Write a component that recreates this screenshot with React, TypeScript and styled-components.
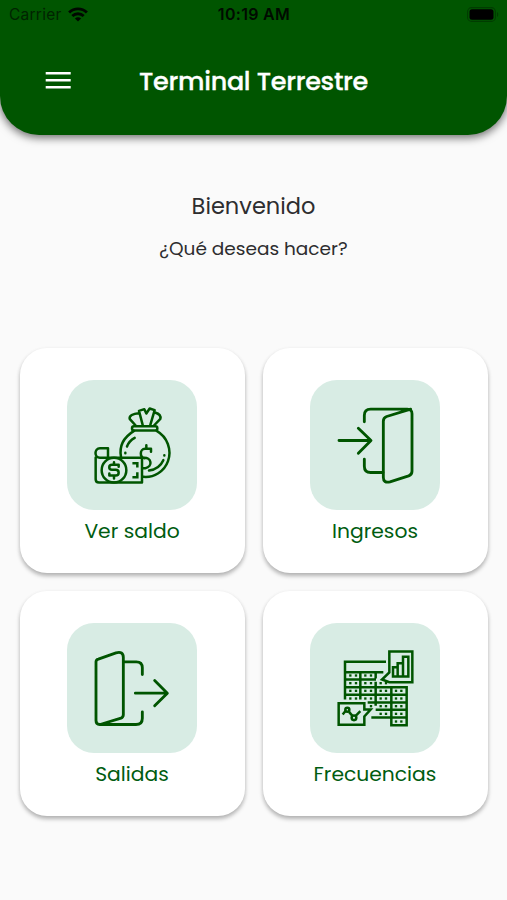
import React from "react";
import styled, { createGlobalStyle } from "styled-components";

const green = "#005500";

const GlobalStyle = createGlobalStyle`
  *, *::before, *::after { box-sizing: border-box; }
  body { margin: 0; background: #fafafa; }
`;

const Screen = styled.div`
  width: 507px;
  height: 900px;
  overflow: hidden;
  background: #fafafa;
  font-family: Poppins, Inter, "Open Sans", sans-serif;
`;

const Header = styled.header`
  height: 135px;
  background: ${green};
  border-radius: 0 0 39px 39px;
  box-shadow: 0 2px 9px 1px rgba(0, 0, 0, 0.55);
`;

const StatusBar = styled.div`
  display: grid;
  grid-template-columns: 1fr auto 1fr;
  align-items: center;
  height: 28px;
  padding: 0 8px 0 9px;
  font-family: Inter, sans-serif;
  font-size: 15.5px;
  color: #000;
`;

const Carrier = styled.div`
  display: flex;
  align-items: center;
  gap: 6px;
  letter-spacing: 0.25px;
  color: #002300;
`;

const Clock = styled.div`
  font-size: 16px;
  font-weight: 600;
  letter-spacing: 0.3px;
  color: #000b00;
`;

const BatterySlot = styled.div`
  display: flex;
  justify-content: flex-end;
`;

const TitleBar = styled.div`
  display: grid;
  grid-template-columns: 71px 1fr 71px;
  align-items: center;
  height: 106px;
`;

const MenuButton = styled.button`
  display: flex;
  justify-content: flex-end;
  padding: 0;
  border: 0;
  background: none;
`;

const Title = styled.h1`
  margin: 0;
  text-align: center;
  white-space: nowrap;
  font-size: 25.5px;
  line-height: 32px;
  font-weight: 500;
  letter-spacing: -0.3px;
  -webkit-text-stroke: 0.3px #fff;
  color: #fff;
`;

const Welcome = styled.section`
  display: flex;
  flex-direction: column;
  align-items: center;
  height: 213px;
  padding-top: 54.5px;
  color: #2d2d2f;
`;

const Greeting = styled.h2`
  margin: 0;
  font-size: 22.5px;
  line-height: 32px;
  font-weight: 400;
`;

const Question = styled.p`
  margin: 12px 0 0;
  font-size: 18.5px;
  line-height: 30px;
`;

const CardGrid = styled.main`
  display: grid;
  grid-template-columns: 225px 225px;
  grid-auto-rows: 225px;
  gap: 18px;
  justify-content: center;
`;

const Card = styled.button`
  display: flex;
  flex-direction: column;
  align-items: center;
  padding: 32px 0 0;
  border: 0;
  border-radius: 27px;
  background: #fff;
  box-shadow: 0 3px 4px rgba(0, 0, 0, 0.27), 0 1px 4px rgba(0, 0, 0, 0.05);
  font: inherit;
  color: #005c10;
`;

const IconTile = styled.div`
  display: flex;
  align-items: center;
  justify-content: center;
  width: 130px;
  height: 130px;
  border-radius: 27px;
  background: #d8ece4;
`;

const CardLabel = styled.span`
  margin-top: 6px;
  font-size: 20.3px;
  line-height: 30px;
`;

const Drawing = styled.svg<{ $stroke?: number }>`
  display: block;
  width: 95px;
  height: 95px;
  fill: none;
  stroke: ${green};
  stroke-width: ${(p) => p.$stroke ?? 8.5};
  stroke-linecap: round;
  stroke-linejoin: round;
`;

const WifiIcon = () => (
  <svg width="20" height="15" viewBox="0 0 20 15" fill="none" stroke="#000800" strokeWidth="2.9">
    <path d="M1.1 5.5C6.2.7 13.8.7 18.9 5.5" />
    <path d="M4.3 9C7.5 6 12.5 6 15.7 9" />
    <path d="M10 14.4 6.9 11.4c1.7-1.6 4.5-1.6 6.2 0Z" fill="#000800" stroke="none" />
  </svg>
);

const BatteryIcon = () => (
  <svg width="32" height="15" viewBox="0 0 32 15">
    <rect x=".6" y=".6" width="27.8" height="13.8" rx="4" fill="none" stroke="#003c00" strokeWidth="1.1" />
    <rect x="2.5" y="2.3" width="24" height="10.4" rx="2.5" fill="#000" />
    <path d="M30 5c1.7.8 1.7 4.2 0 5Z" fill="#003c00" />
  </svg>
);

const MenuIcon = () => (
  <svg width="26" height="18" viewBox="0 0 26 18" fill="#fff">
    <path d="M.7 0h25v2.6H.7zM.7 7h25v2.6H.7zM.7 14h25v2.6H.7z" />
  </svg>
);

const MoneyIcon = () => (
  <Drawing viewBox="0 7.5 285 285" $stroke={7.5}>
    <rect x="141" y="92" width="76" height="13" rx="6" />
    <path d="M152 90 134 70c-2-9 10-16 27-17 M173 88 162 46l16-5 6 13 10-15 15 5-13 44 M210 51c13 4 18 11 16 19l-19 20" />
    <path d="M108 184c-6-31 7-58 39-78 M215 106c32 18 46 57 34 91-11 31-42 50-74 47" />
    <path d="M126 153c4-11 12-20 23-26 M235 194c-8 18-22 28-43 31" />
    <path d="M121 172v1 M238 179v1" />
    <path d="M184 149v9 M198 169v-9h-18c-16 0-17 26-1 28 M174 187c27-3 30 27 7 31h-8" />
    <path d="M32 186v65q0 10 10 10h129v-74H45c-18 0-18-29 0-29h24v28" />
    <circle cx="87" cy="224" r="37" />
    <path d="M101 214v-6H81c-11 0-11 15 0 15h11c12 0 12 17 0 17H73v-6 M87 200v8 M87 240v9" />
    <path d="M146 203h11v9 M157 234v11h-11" strokeLinecap="square" strokeLinejoin="miter" />
  </Drawing>
);

const EnterIcon = () => (
  <Drawing viewBox="0 7.5 285 285">
    <path d="M109 79V60q0-19 19-19h110q14 0 14 14v172q0 10-10 14l-56 18q-20 5-20-14V77q0-10 10-14l72-22" />
    <path d="M109 191v21q0 19 19 19h37 M33 135h95 M91 98l38 37-38 38" />
  </Drawing>
);

const ExitIcon = () => (
  <Drawing viewBox="0 1.5 285 285">
    <path d="M172 102V82q0-18-18-18h-37 M172 214v19q0 19-19 19H44q-11 0-11-12V64q0-6 7-8l53-19q22-6 22 14v171q0 8-7 11l-63 19" />
    <path d="M151 158h95 M209 120l38 38-38 38" />
  </Drawing>
);

const cellDots = [
  [67, 105], [84, 105], [112, 105], [129, 105],
  [67, 128], [84, 128], [112, 128], [129, 128], [158, 128], [174, 128],
  [67, 151], [84, 151], [112, 151], [129, 151], [158, 151], [174, 151], [204, 151], [220, 151],
  [67, 174], [84, 174], [112, 174], [129, 174], [158, 174], [174, 174], [204, 174], [220, 174],
  [129, 197], [158, 197], [174, 197], [204, 197], [220, 197],
  [158, 220], [174, 220], [204, 220], [220, 220],
  [204, 243], [220, 243],
];

const ScheduleIcon = () => (
  <Drawing viewBox="0 1.5 285 285" $stroke={7.5}>
    <g strokeLinecap="butt" strokeLinejoin="miter">
      <path d="M51 177V64h123 M51 95h115 M51 117h93 M51 140h185v114h-46V140 M51 163h185 M97 95v82 M143 95v19 M143 124v72 M119 186h117 M143 208h93 M130 231h106" />
      <path d="M184 96V33h69v92h-69l-22-8Z M195 80h14v28h-14z M209 68h16v40h-16z M225 49h16v59h-16z" />
      <path d="M32 188h77v19h19l-19 21v25H32z" />
      <path d="m44 222 9-11 M63 214l11 13 M83 226l14-14" />
      <circle cx="58" cy="208" r="6" />
      <circle cx="78" cy="232" r="7" />
    </g>
    <g fill={green} stroke="none">
      {cellDots.map(([x, y]) => (
        <rect key={`${x}-${y}`} x={x - 3.5} y={y - 3.5} width="7" height="7" />
      ))}
    </g>
  </Drawing>
);

const actions = [
  { label: "Ver saldo", Icon: MoneyIcon },
  { label: "Ingresos", Icon: EnterIcon },
  { label: "Salidas", Icon: ExitIcon },
  { label: "Frecuencias", Icon: ScheduleIcon },
];

export default function App() {
  return (
    <>
      <GlobalStyle />
      <Screen>
        <Header>
          <StatusBar>
            <Carrier>
              Carrier
              <WifiIcon />
            </Carrier>
            <Clock>10:19 AM</Clock>
            <BatterySlot>
              <BatteryIcon />
            </BatterySlot>
          </StatusBar>
          <TitleBar>
            <MenuButton aria-label="Menú">
              <MenuIcon />
            </MenuButton>
            <Title>Terminal Terrestre</Title>
          </TitleBar>
        </Header>
        <Welcome>
          <Greeting>Bienvenido</Greeting>
          <Question>¿Qué deseas hacer?</Question>
        </Welcome>
        <CardGrid>
          {actions.map(({ label, Icon }) => (
            <Card key={label}>
              <IconTile>
                <Icon />
              </IconTile>
              <CardLabel>{label}</CardLabel>
            </Card>
          ))}
        </CardGrid>
      </Screen>
    </>
  );
}
